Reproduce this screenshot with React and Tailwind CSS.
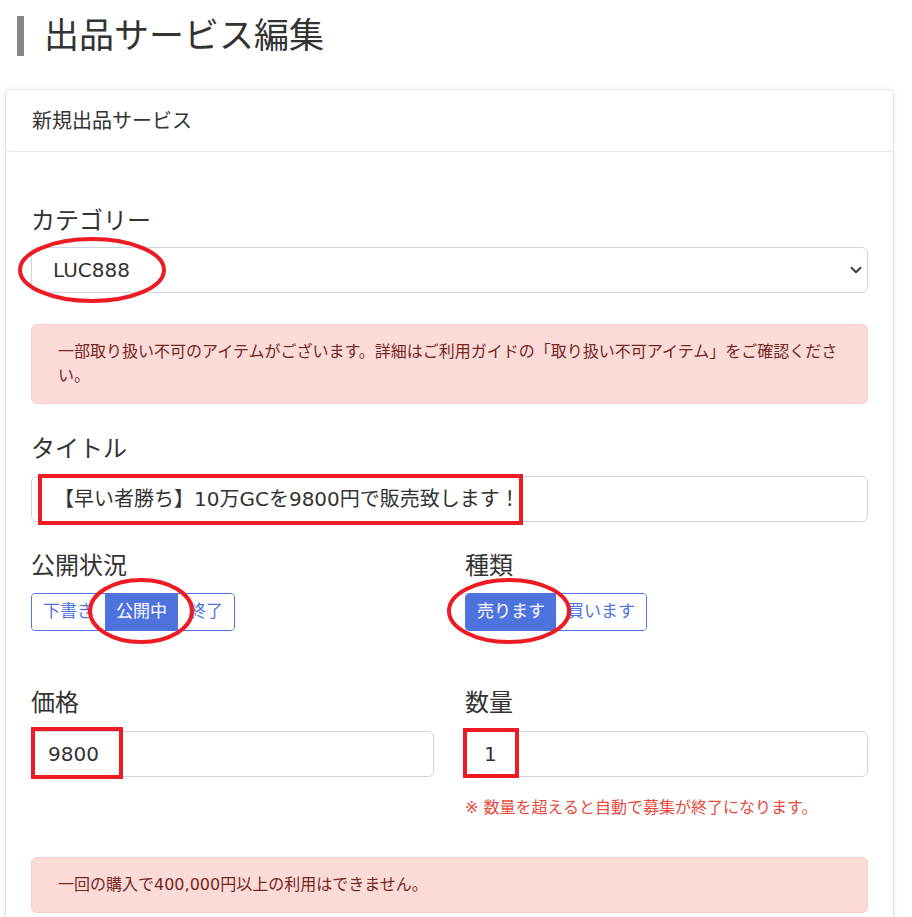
const font = '"DejaVu Sans", "Noto Sans CJK JP", sans-serif';

const Label = ({ children }) => (
  <div className="text-[24px] leading-[36px] text-[#333] mb-[10px]">{children}</div>
);

const Input = ({ value, pl = 'pl-[16px]' }) => (
  <div className={`h-[46px] border border-[#d1d3e2] rounded-[6px] bg-white flex items-center ${pl} text-[20px] text-[#333]`}>
    {value}
  </div>
);

const Alert = ({ children }) => (
  <div className="border border-[#f8ccc8] bg-[#fadbd8] text-[#78261f] rounded-[6px] px-[26px] py-[15px] text-[16px] leading-[24px]">
    {children}
  </div>
);

const ButtonGroup = ({ items, active }) => (
  <div className="inline-flex border border-[#4e73df] rounded-[4px] overflow-hidden">
    {items.map((item) => (
      <div
        key={item}
        className={
          item === active
            ? 'h-[36px] px-[11px] flex items-center text-[17px] bg-[#4e73df] text-white'
            : 'h-[36px] px-[11px] flex items-center text-[17px] bg-white text-[#4e73df]'
        }
      >
        {item}
      </div>
    ))}
  </div>
);

// red marks drawn over the screenshot
const Annotations = () => (
  <svg className="absolute left-0 top-0 pointer-events-none" width="912" height="917" fill="none" stroke="#ed1c24" strokeWidth="4">
    <ellipse cx="92" cy="270" rx="72" ry="31" />
    <rect x="40" y="476" width="481" height="47" />
    <ellipse cx="141" cy="611" rx="51" ry="31" />
    <ellipse cx="509" cy="611" rx="60" ry="31" />
    <rect x="33" y="729" width="88" height="48" />
    <rect x="465" y="730" width="52" height="46" />
  </svg>
);

const App = () => {
  return (
    <div className="relative w-[912px] min-h-[917px] bg-white overflow-hidden" style={{ fontFamily: font }}>
      <div className="flex items-center mt-[16px] ml-[17px] h-[40px]">
        <div className="w-[7px] h-[40px] bg-[#888]" />
        <h1 className="ml-[20px] text-[35px] leading-[40px] text-[#333]">出品サービス編集</h1>
      </div>

      <div className="mt-[33px] ml-[5px] w-[889px] border border-[#e3e6f0] rounded-[5px] bg-white shadow-[0_0_6px_rgba(58,59,69,0.08)]">
        <div className="h-[62px] border-b border-[#e3e6f0] px-[26px] flex items-center text-[20px] text-[#333]">
          新規出品サービス
        </div>

        <div className="px-[25px] pt-[51px] pb-[40px]">
          <Label>カテゴリー</Label>
          <div className="relative -mt-[2px]">
            <Input value="LUC888" pl="pl-[21px]" />
            <svg className="absolute right-[6px] top-[18px]" width="12" height="10" viewBox="0 0 16 12" fill="none" stroke="#343a40" strokeWidth="2.5" strokeLinecap="round" strokeLinejoin="round">
              <path d="M2 3l6 6 6-6" />
            </svg>
          </div>

          <div className="mt-[31px]">
            <Alert>
              一部取り扱い不可のアイテムがございます。詳細はご利用ガイドの「取り扱い不可アイテム」をご確認くださ
              <br />
              い。
            </Alert>
          </div>

          <div className="mt-[27px]">
            <Label>タイトル</Label>
            <div className="-mt-[1px]">
              <Input value="【早い者勝ち】10万GCを9800円で販売致します！" pl="pl-[22px]" />
            </div>
          </div>

          <div className="grid grid-cols-2 gap-x-[31px] mt-[26px]">
            <div>
              <Label>公開状況</Label>
              <div className="-mt-[1px]">
                <ButtonGroup items={['下書き', '公開中', '終了']} active="公開中" />
              </div>
            </div>
            <div>
              <Label>種類</Label>
              <div className="-mt-[1px]">
                <ButtonGroup items={['売ります', '買います']} active="売ります" />
              </div>
            </div>
          </div>

          <div className="grid grid-cols-2 gap-x-[31px] mt-[54px]">
            <div>
              <Label>価格</Label>
              <Input value="9800" />
            </div>
            <div>
              <Label>数量</Label>
              <Input value="1" pl="pl-[18px]" />
              <div className="mt-[19px] text-[16px] leading-[24px] text-[#e74a3b]">※ 数量を超えると自動で募集が終了になります。</div>
            </div>
          </div>

          <div className="mt-[37px]">
            <Alert>一回の購入で400,000円以上の利用はできません。</Alert>
          </div>
        </div>
      </div>

      <Annotations />
    </div>
  );
};

export default App;
